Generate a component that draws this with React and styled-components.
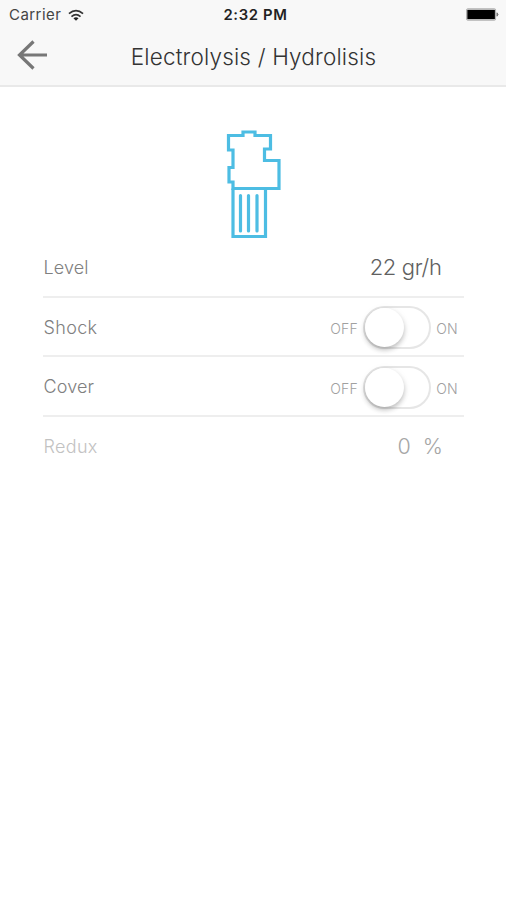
import React from "react";
import styled, { createGlobalStyle } from "styled-components";

const GlobalStyle = createGlobalStyle`
  * { box-sizing: border-box; }
  body { margin: 0; background: #fff; font-family: Inter, "Liberation Sans", sans-serif; }
`;

const Screen = styled.main`
  width: 506px;
  height: 900px;
  overflow: hidden;
  background: #fff;
`;

const Header = styled.header`
  height: 87px;
  background: #f8f8f8;
  border-bottom: 2px solid #e9e9e9;
`;

const StatusBar = styled.div`
  display: grid;
  grid-template-columns: 1fr auto 1fr;
  align-items: center;
  height: 28px;
  padding: 1px 7px 0 9px;
  color: #111;
`;

const Carrier = styled.div`
  display: flex;
  align-items: center;
  gap: 7px;
  font-size: 15px;
  line-height: 28px;
  letter-spacing: 0.45px;
  color: #444;
`;

const Clock = styled.div`
  padding-left: 3px;
  font-size: 15px;
  line-height: 28px;
  font-weight: 600;
  letter-spacing: 0.65px;
  font-size: 14.8px;
  color: #222;
`;

const Battery = styled.svg`
  justify-self: end;
  margin-top: -2px;
`;

const NavBar = styled.div`
  display: grid;
  grid-template-columns: 64px 1fr 64px;
  align-items: center;
  height: 57px;
`;

const BackButton = styled.button`
  display: flex;
  padding: 0 0 3px 16px;
  border: 0;
  background: none;
`;

const Title = styled.h1`
  margin: 0;
  padding-left: 1px;
  text-align: center;
  white-space: nowrap;
  font-size: 22.5px;
  font-weight: 300;
  line-height: 56px;
  letter-spacing: 0.17px;
  color: #333;
`;

const Device = styled.div`
  display: flex;
  justify-content: center;
  height: 151px;
  padding-top: 42px;
`;

const Settings = styled.section`
  margin: 0 42px 0 43px;
`;

const Row = styled.div`
  display: flex;
  align-items: center;
  justify-content: space-between;
  height: ${(p) => p.$height || 60}px;
  border-bottom: ${(p) => (p.$last ? "none" : "2px solid #eee")};
`;

const Label = styled.span`
  padding: 1px 0 0 0.6px;
  font-size: 18px;
  font-weight: 300;
  color: ${(p) => (p.$muted ? "#c2c2c2" : "#808080")};
  letter-spacing: ${(p) => p.$track || 0}px;
`;

const Value = styled.span`
  padding-right: ${(p) => (p.$muted ? 21 : 22.5)}px;
  font-size: ${(p) => (p.$muted ? 21.5 : 22)}px;
  font-weight: 300;
  letter-spacing: ${(p) => (p.$muted ? 0 : -0.35)}px;
  word-spacing: ${(p) => (p.$muted ? 6 : 0)}px;
  color: ${(p) => (p.$muted ? "#a6a6a6" : "#606060")};
`;

const SwitchGroup = styled.div`
  display: flex;
  align-items: center;
  gap: 5px;
  padding: 2px 6px 0 0;
`;

const SwitchLabel = styled.span`
  padding-top: 3px;
  font-size: 14px;
  font-weight: 300;
  line-height: 16px;
  letter-spacing: 0.3px;
  color: #a0a0a0;
`;

const Track = styled.button`
  display: flex;
  width: 68px;
  height: 43px;
  padding: 0;
  border: 2px solid #e6e6e6;
  border-radius: 22px;
  background: #fff;
`;

const Knob = styled.span`
  width: 39px;
  height: 39px;
  border-radius: 50%;
  background: #fff;
  box-shadow: 0 3px 5px rgba(0, 0, 0, 0.23), 0 1px 8px rgba(0, 0, 0, 0.05);
`;

function Switch({ name }) {
  return (
    <SwitchGroup>
      <SwitchLabel>OFF</SwitchLabel>
      <Track role="switch" aria-checked="false" aria-label={name}>
        <Knob />
      </Track>
      <SwitchLabel>ON</SwitchLabel>
    </SwitchGroup>
  );
}

function WifiIcon() {
  return (
    <svg width="16" height="13" viewBox="0 0 17 13" fill="none" stroke="#333" strokeWidth="1.8">
      <path d="M1 4.6Q8.5-1.8 16 4.6" />
      <path d="M3.7 7.6Q8.5 3.4 13.3 7.6" />
      <path d="M8.5 12 5.8 9.3Q8.5 7.3 11.2 9.3Z" fill="#222" stroke="none" />
    </svg>
  );
}

function CellIcon() {
  return (
    <svg width="56" height="110" viewBox="0 0 56 110" fill="none" stroke="#4dbde3" strokeWidth="3.2">
      <path d="M3.5 6.5H18V3H30V6.5H45.5V20H39.5V31.5H54V59.5H8V53H4V38.5H8V21H3.5Z" />
      <path d="M8 59.5V107.5H40.5V59.5" />
      <path d="M15.5 66.5V102M23.5 66.5V102M32 66.5V102" strokeLinecap="round" />
    </svg>
  );
}

export default function App() {
  return (
    <>
      <GlobalStyle />
      <Screen>
        <Header>
          <StatusBar>
            <Carrier>
              Carrier
              <WifiIcon />
            </Carrier>
            <Clock>2:32 PM</Clock>
            <Battery width="33" height="13" viewBox="0 0 33 13">
              <rect x=".6" y=".8" width="29" height="11.4" rx="1" fill="#fff" stroke="#aaa" />
              <rect x="1.3" y="1.8" width="27.6" height="9.4" fill="#000" />
              <path d="M31 4.8Q33 6.5 31 8.2Z" fill="#777" stroke="#777" />
            </Battery>
          </StatusBar>
          <NavBar>
            <BackButton aria-label="Back">
              <svg width="32" height="30" viewBox="0 0 32 30" fill="none" stroke="#777" strokeWidth="3.2">
                <path d="M17.5 1.5 3.5 15 17.5 28.5M3.5 15H31" />
              </svg>
            </BackButton>
            <Title>Electrolysis / Hydrolisis</Title>
          </NavBar>
        </Header>
        <Device>
          <CellIcon />
        </Device>
        <Settings>
          <Row>
            <Label $track={0.1}>Level</Label>
            <Value>22 gr/h</Value>
          </Row>
          <Row $height={59}>
            <Label $track={0.3}>Shock</Label>
            <Switch name="Shock" />
          </Row>
          <Row>
            <Label $track={0.1}>Cover</Label>
            <Switch name="Cover" />
          </Row>
          <Row $height={58} $last>
            <Label $muted $track={0.3}>Redux</Label>
            <Value $muted>0 %</Value>
          </Row>
        </Settings>
      </Screen>
    </>
  );
}
